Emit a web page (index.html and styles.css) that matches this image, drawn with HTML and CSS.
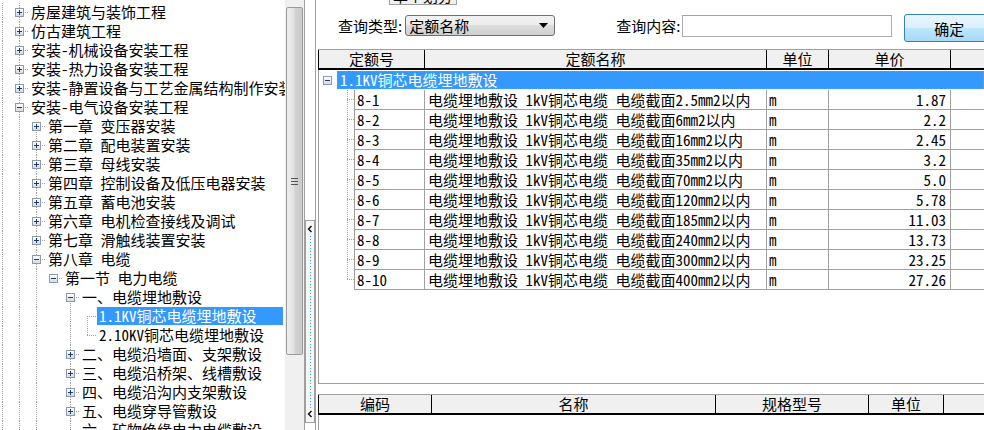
FILE: index.html
```html
<!DOCTYPE html>
<html>
<head>
<meta charset="utf-8">
<title>定额查询</title>
<link rel="stylesheet" href="styles.css">
</head>
<body>
<div class="app">
  <div class="side">
    <div class="tree">
      <div class="row"><i class="ind0 ln"></i><i class="btn full"><b class="box plus"></b></i><span class="lbl">房屋建筑与装饰工程</span></div>
      <div class="row"><i class="ind0 ln"></i><i class="btn full"><b class="box plus"></b></i><span class="lbl">仿古建筑工程</span></div>
      <div class="row"><i class="ind0 ln"></i><i class="btn full"><b class="box plus"></b></i><span class="lbl">安装-机械设备安装工程</span></div>
      <div class="row"><i class="ind0 ln"></i><i class="btn full"><b class="box plus"></b></i><span class="lbl">安装-热力设备安装工程</span></div>
      <div class="row"><i class="ind0 ln"></i><i class="btn full"><b class="box plus"></b></i><span class="lbl">安装-静置设备与工艺金属结构制作安装工程</span></div>
      <div class="row"><i class="ind0 ln"></i><i class="btn full"><b class="box minus"></b></i><span class="lbl">安装-电气设备安装工程</span></div>
      <div class="row"><i class="ind0 ln"></i><i class="ind ln"></i><i class="btn bot"><b class="box plus"></b></i><span class="lbl">第一章 变压器安装</span></div>
      <div class="row"><i class="ind0 ln"></i><i class="ind ln"></i><i class="btn full"><b class="box plus"></b></i><span class="lbl">第二章 配电装置安装</span></div>
      <div class="row"><i class="ind0 ln"></i><i class="ind ln"></i><i class="btn full"><b class="box plus"></b></i><span class="lbl">第三章 母线安装</span></div>
      <div class="row"><i class="ind0 ln"></i><i class="ind ln"></i><i class="btn full"><b class="box plus"></b></i><span class="lbl">第四章 控制设备及低压电器安装</span></div>
      <div class="row"><i class="ind0 ln"></i><i class="ind ln"></i><i class="btn full"><b class="box plus"></b></i><span class="lbl">第五章 蓄电池安装</span></div>
      <div class="row"><i class="ind0 ln"></i><i class="ind ln"></i><i class="btn full"><b class="box plus"></b></i><span class="lbl">第六章 电机检查接线及调试</span></div>
      <div class="row"><i class="ind0 ln"></i><i class="ind ln"></i><i class="btn full"><b class="box plus"></b></i><span class="lbl">第七章 滑触线装置安装</span></div>
      <div class="row"><i class="ind0 ln"></i><i class="ind ln"></i><i class="btn full"><b class="box minus"></b></i><span class="lbl">第八章 电缆</span></div>
      <div class="row"><i class="ind0 ln"></i><i class="ind ln"></i><i class="ind ln"></i><i class="btn"><b class="box minus"></b></i><span class="lbl">第一节 电力电缆</span></div>
      <div class="row"><i class="ind0 ln"></i><i class="ind ln"></i><i class="ind ln"></i><i class="ind"></i><i class="btn bot"><b class="box minus"></b></i><span class="lbl">一、电缆埋地敷设</span></div>
      <div class="row"><i class="ind0 ln"></i><i class="ind ln"></i><i class="ind ln"></i><i class="ind"></i><i class="ind ln"></i><i class="btn bot"></i><span class="lbl on">1.1KV铜芯电缆埋地敷设</span></div>
      <div class="row"><i class="ind0 ln"></i><i class="ind ln"></i><i class="ind ln"></i><i class="ind"></i><i class="ind ln"></i><i class="btn top"></i><span class="lbl">2.10KV铜芯电缆埋地敷设</span></div>
      <div class="row"><i class="ind0 ln"></i><i class="ind ln"></i><i class="ind ln"></i><i class="ind"></i><i class="btn full"><b class="box plus"></b></i><span class="lbl">二、电缆沿墙面、支架敷设</span></div>
      <div class="row"><i class="ind0 ln"></i><i class="ind ln"></i><i class="ind ln"></i><i class="ind"></i><i class="btn full"><b class="box plus"></b></i><span class="lbl">三、电缆沿桥架、线槽敷设</span></div>
      <div class="row"><i class="ind0 ln"></i><i class="ind ln"></i><i class="ind ln"></i><i class="ind"></i><i class="btn full"><b class="box plus"></b></i><span class="lbl">四、电缆沿沟内支架敷设</span></div>
      <div class="row"><i class="ind0 ln"></i><i class="ind ln"></i><i class="ind ln"></i><i class="ind"></i><i class="btn full"><b class="box plus"></b></i><span class="lbl">五、电缆穿导管敷设</span></div>
      <div class="row"><i class="ind0 ln"></i><i class="ind ln"></i><i class="ind ln"></i><i class="ind"></i><i class="btn full"></i><span class="lbl">六、矿物绝缘电力电缆敷设</span></div>
    </div>
    <div class="vscroll"><div class="thumb"><i class="grip"></i></div></div>
  </div>

  <div class="splitter">
    <div class="handle">
      <svg width="8" height="201" viewBox="0 0 8 201">
        <path d="M5.5 5L2.5 8L5.5 11" fill="none" stroke="#000" stroke-width="1.3"/>
        <line x1="4.5" y1="15" x2="4.5" y2="188" stroke="#3399ff" stroke-dasharray="1 2"/>
        <path d="M5.5 190L2.5 193L5.5 196" fill="none" stroke="#000" stroke-width="1.3"/>
      </svg>
    </div>
  </div>

  <div class="main">
    <div class="tabbar"><div class="tab"><span>单个划分</span></div></div>
    <div class="toolbar">
      <span class="cap">查询类型:</span>
      <div class="combo"><span>定额名称</span><svg width="9" height="5" viewBox="0 0 9 5"><path d="M0 0H9L4.5 5Z"/></svg></div>
      <span class="cap cap2">查询内容:</span>
      <div class="inp"></div>
      <div class="ok">确定</div>
    </div>

    <div class="grid grid1">
      <div class="ghead">
        <div style="width:106px">定额号</div>
        <div style="width:342px">定额名称</div>
        <div style="width:62px">单位</div>
        <div style="width:122px">单价</div>
        <div class="fill"></div>
      </div>
      <div class="gbody">
        <div class="grp"><span class="t"><b class="box minus"></b></span><span class="glbl">1.1KV铜芯电缆埋地敷设</span></div>
        <div class="r"><span class="t"></span><span class="c code">8-1</span><span class="c name">电缆埋地敷设 1kV铜芯电缆 电缆截面2.5mm2以内</span><span class="c unit">m</span><span class="c price">1.87</span><span class="c fill"></span></div>
        <div class="r"><span class="t"></span><span class="c code">8-2</span><span class="c name">电缆埋地敷设 1kV铜芯电缆 电缆截面6mm2以内</span><span class="c unit">m</span><span class="c price">2.2</span><span class="c fill"></span></div>
        <div class="r"><span class="t"></span><span class="c code">8-3</span><span class="c name">电缆埋地敷设 1kV铜芯电缆 电缆截面16mm2以内</span><span class="c unit">m</span><span class="c price">2.45</span><span class="c fill"></span></div>
        <div class="r"><span class="t"></span><span class="c code">8-4</span><span class="c name">电缆埋地敷设 1kV铜芯电缆 电缆截面35mm2以内</span><span class="c unit">m</span><span class="c price">3.2</span><span class="c fill"></span></div>
        <div class="r"><span class="t"></span><span class="c code">8-5</span><span class="c name">电缆埋地敷设 1kV铜芯电缆 电缆截面70mm2以内</span><span class="c unit">m</span><span class="c price">5.0</span><span class="c fill"></span></div>
        <div class="r"><span class="t"></span><span class="c code">8-6</span><span class="c name">电缆埋地敷设 1kV铜芯电缆 电缆截面120mm2以内</span><span class="c unit">m</span><span class="c price">5.78</span><span class="c fill"></span></div>
        <div class="r"><span class="t"></span><span class="c code">8-7</span><span class="c name">电缆埋地敷设 1kV铜芯电缆 电缆截面185mm2以内</span><span class="c unit">m</span><span class="c price">11.03</span><span class="c fill"></span></div>
        <div class="r"><span class="t"></span><span class="c code">8-8</span><span class="c name">电缆埋地敷设 1kV铜芯电缆 电缆截面240mm2以内</span><span class="c unit">m</span><span class="c price">13.73</span><span class="c fill"></span></div>
        <div class="r"><span class="t"></span><span class="c code">8-9</span><span class="c name">电缆埋地敷设 1kV铜芯电缆 电缆截面300mm2以内</span><span class="c unit">m</span><span class="c price">23.25</span><span class="c fill"></span></div>
        <div class="r last"><span class="t"></span><span class="c code">8-10</span><span class="c name">电缆埋地敷设 1kV铜芯电缆 电缆截面400mm2以内</span><span class="c unit">m</span><span class="c price">27.26</span><span class="c fill"></span></div>
      </div>
    </div>

    <div class="grid grid2">
      <div class="ghead">
        <div style="width:113px">编码</div>
        <div style="width:284px">名称</div>
        <div style="width:153px">规格型号</div>
        <div style="width:75px">单位</div>
        <div class="fill"></div>
      </div>
      <div class="gbody"></div>
    </div>
  </div>
</div>
</body>
</html>
```

FILE: styles.css
```css
*{ box-sizing:border-box;}
html,body{ margin:0; height:100%; overflow:hidden; background:#fff;}
body{ font:15px "Noto Sans Mono CJK SC","Noto Sans CJK SC",sans-serif; color:#000;}
i,b{ display:block; font-style:normal;}

:root{
  --dv:repeating-linear-gradient(#a0a0a0 0 1px,transparent 1px 2px);
  --dh:repeating-linear-gradient(to right,#a0a0a0 0 1px,transparent 1px 2px);
}

.app{ display:flex; width:984px; height:430px; overflow:hidden;}

/* left tree */
.side{ display:flex; flex:none; width:305px; border-right:1px solid #a0a0a0;}
.tree{ width:285px; flex:none; overflow:hidden; padding-top:3px; white-space:nowrap;}
.row{ display:flex; height:19px;}
.ind0{ flex:none; width:11px;}
.ind{ flex:none; width:17px;}
.ind0.ln{ background:var(--dv) 2px 0/1px 100% no-repeat;}
.ind.ln{ background:var(--dv) 8px 0/1px 100% no-repeat;}
.btn{ flex:none; width:17px; display:flex; align-items:center; justify-content:center;
  background:var(--dh) right 9px/9px 1px no-repeat;}
.btn.full{ background:var(--dh) right 9px/9px 1px no-repeat, var(--dv) 8px 0/1px 100% no-repeat;}
.btn.bot{ background:var(--dh) right 9px/9px 1px no-repeat, var(--dv) 8px 9px/1px 10px no-repeat;}
.btn.top{ background:var(--dh) right 9px/9px 1px no-repeat, var(--dv) 8px 0/1px 10px no-repeat;}
.box{ flex:none; width:9px; height:9px; border:1px solid #8f9aab; background:linear-gradient(#fff,#d6dae0);}
.box.plus{ background:linear-gradient(#1c3a6e,#1c3a6e) center/5px 1px no-repeat, linear-gradient(#1c3a6e,#1c3a6e) center/1px 5px no-repeat, linear-gradient(#fff,#d6dae0);}
.box.minus{ background:linear-gradient(#1c3a6e,#1c3a6e) center/5px 1px no-repeat, linear-gradient(#fff,#d6dae0);}
.lbl{ flex:none; height:18px; line-height:18px; margin-left:1px; padding:0 2px;}
.lbl.on{ flex:1; margin-right:2px; background:#3399ff; color:#fff;}

.vscroll{ width:19px; flex:none; background:#f0f0f0; padding:7px 1px 0;}
.thumb{ height:348px; border:1px solid #9a9a9a; border-radius:2px; display:flex; align-items:center; justify-content:center;
  background:linear-gradient(to right,#eeeeee,#e2e2e2 45%,#d2d2d2 55%,#cacaca);}
.grip{ width:7px; height:7px; background:repeating-linear-gradient(#555 0 1px,transparent 1px 3px);}

/* splitter */
.splitter{ flex:none; width:10px; padding-top:220px;}
.handle{ height:203px; border:1px solid #a0a0a0; background:#f6f6f6;}
.handle svg{ display:block;}

/* right side */
.main{ flex:1; min-width:0; display:flex; flex-direction:column; border-left:1px solid #a0a0a0;}
.tabbar{ height:6px; padding-left:73px;}
.tab{ width:68px; height:5px; border:1px solid #a0a0a0; border-top:0; background:#f0f0f0; overflow:hidden;
  display:flex; align-items:flex-end; justify-content:center; font-family:"Noto Sans CJK SC",sans-serif;}
.tab span{ flex:none; line-height:17px;}

.toolbar{ height:43px; flex:none; display:flex; align-items:flex-start; padding-left:22px; font-family:"Noto Sans CJK SC",sans-serif; white-space:nowrap;}
.cap{ margin-top:9px; line-height:21px;}
.cap2{ margin-left:61px;}
.combo{ flex:none; width:150px; height:21px; margin:9px 0 0 3px; padding:0 6px 0 3px; border:1px solid #707070; border-radius:3px;
  display:flex; align-items:center; justify-content:space-between; line-height:19px;
  background:linear-gradient(#f2f2f2,#ebebeb 50%,#dddddd 50%,#cfcfcf);}
.combo svg{ display:block;}
.inp{ flex:none; width:210px; height:22px; margin:9px 0 0 2px; border:1px solid #abadb3; border-top-color:#a0a3aa; background:#fff;}
.ok{ flex:none; width:90px; height:28px; margin:8px 0 0 12px; border:1px solid #3c7fb1; border-radius:3px;
  display:flex; align-items:center; justify-content:center;
  background:linear-gradient(#eaf6fd,#d9f0fc 50%,#bee6fd 50%,#a7d9f5);}

/* grids */
.grid{ margin-left:2px; border-top:1px solid #a0a0a0; display:flex; flex-direction:column; white-space:nowrap;}
.grid1{ height:335px; flex:none; border-bottom:1px solid #a0a0a0;}
.grid2{ flex:1; margin-top:10px;}
.ghead{ display:flex; flex:none; height:20px; border-bottom:2px solid #000; background:#f0f0f0;}
.ghead div{ flex:none; border-left:1px solid #000; text-align:center; line-height:18px;}
.ghead .fill{ flex:1;}
.gbody{ flex:1; border-left:1px solid #a0a0a0;}

.grp{ display:flex; height:20px;}
.grp .t{ flex:none; width:18px; padding:6px 0 0 4px;}
.glbl{ flex:1; margin:1px 0; padding-left:2px; border:1px dotted #d9822b; background:#3399ff; color:#fff; line-height:16px;}

.r{ display:flex; height:20px;}
.r .t{ flex:none; width:35px; background:var(--dh) right 9px/7px 1px no-repeat, var(--dv) 28px 0/1px 100% no-repeat;}
.r.last .t{ background:var(--dh) right 9px/7px 1px no-repeat, var(--dv) 28px 0/1px 10px no-repeat;}
.c{ flex:none; border-left:1px solid #a0a0a0; border-bottom:1px solid #a0a0a0; line-height:19px; overflow:hidden;}
.code{ width:70px; padding-left:2px;}
.name{ width:342px; padding-left:3px;}
.unit{ width:62px; padding-left:2px;}
.price{ width:122px; padding-right:4px; text-align:right;}
.c.fill{ flex:1;}
```
